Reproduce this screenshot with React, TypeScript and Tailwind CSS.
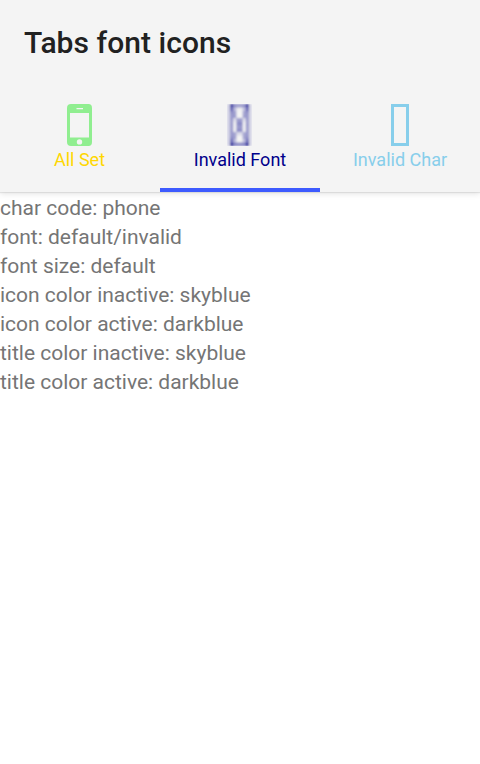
// Opacity (percent) of each cell in the fallback glyph.
const glyph = [
  [13, 80, 42, 36, 36, 42, 78, 11],
  [13, 60, 24, 2, 2, 22, 58, 11],
  [13, 42, 36, 0, 0, 34, 42, 11],
  [13, 38, 38, 0, 0, 36, 38, 11],
  [13, 38, 8, 36, 36, 8, 38, 11],
  [13, 38, 0, 44, 46, 0, 38, 11],
  [13, 38, 0, 38, 40, 0, 38, 11],
  [13, 38, 0, 44, 44, 0, 38, 11],
  [13, 38, 34, 10, 10, 32, 38, 11],
  [13, 42, 36, 0, 0, 34, 42, 11],
  [13, 56, 24, 0, 0, 22, 54, 11],
  [13, 88, 48, 44, 44, 48, 86, 11],
];

function FallbackGlyph() {
  return (
    <svg width="26" height="42" viewBox="0 0 26 42" className="overflow-hidden">
      <defs>
        <filter id="soften" x="0" y="0" width="1" height="1">
          <feGaussianBlur stdDeviation="0.8" edgeMode="duplicate" />
        </filter>
      </defs>
      <g filter="url(#soften)">
        <rect width="25" height="42" fill="#f4f4f4" />
        {glyph.map((row, y) => row.map((a, x) => (
          <rect key={`${x}-${y}`} x={x * 3.125} y={y * 3.5} width="3.125" height="3.5" fill="#00008b" fillOpacity={a / 100} />
        )))}
      </g>
    </svg>
  );
}

const lines = [
  'char code: phone',
  'font: default/invalid',
  'font size: default',
  'icon color inactive: skyblue',
  'icon color active: darkblue',
  'title color inactive: skyblue',
  'title color active: darkblue',
];

export default function App() {
  return (
    <div className="h-[764px] w-[480px] overflow-hidden bg-white font-[Roboto,sans-serif]">
      <header className="h-48 bg-[#f4f4f4] shadow-[0_1px_1px_rgba(0,0,0,0.08),0_2px_6px_rgba(0,0,0,0.1)]">
        <h1 className="h-[86px] pl-6 text-[30px] font-medium leading-[86px] tracking-[0.05px] text-[#212121]">Tabs font icons</h1>
        <nav className="grid h-[106px] grid-cols-3 text-center text-[18px] leading-[22px]">
          <div className="flex flex-col items-center pt-[18px] text-[#ffd700]">
            <svg width="26" height="42" viewBox="0 0 26 42">
              <path fill="#90ee90" fillRule="evenodd" d="M4 0h17.500q3.500 0 3.500 4v34q0 4-3.500 4H4q-4 0-4-4V4q0-4 4-4ZM3 9v24.500h19V9ZM9.500 4v1.200h6.500V4ZM12.500 35.200a2.700 2.700 0 1 0 0 5.400a2.700 2.700 0 1 0 0-5.400Z" />
            </svg>
            <span className="mt-[3px] pr-px">All Set</span>
          </div>
          <div className="flex flex-col items-center border-b-4 border-[#3d5afe] pt-[18px] text-[#00008b]">
            <FallbackGlyph />
            <span className="mt-[3px]">Invalid Font</span>
          </div>
          <div className="flex flex-col items-center pt-[18px] text-[#87ceeb]">
            <div className="h-[42px] w-[18px] border-[3px] border-[#87ceeb]" />
            <span className="mt-[3px]">Invalid Char</span>
          </div>
        </nav>
      </header>
      <main className="pt-[2px] text-[21px] leading-[29px] tracking-[-0.01px] text-[#757575]">
        {lines.map((line) => <p key={line}>{line}</p>)}
      </main>
    </div>
  );
}
